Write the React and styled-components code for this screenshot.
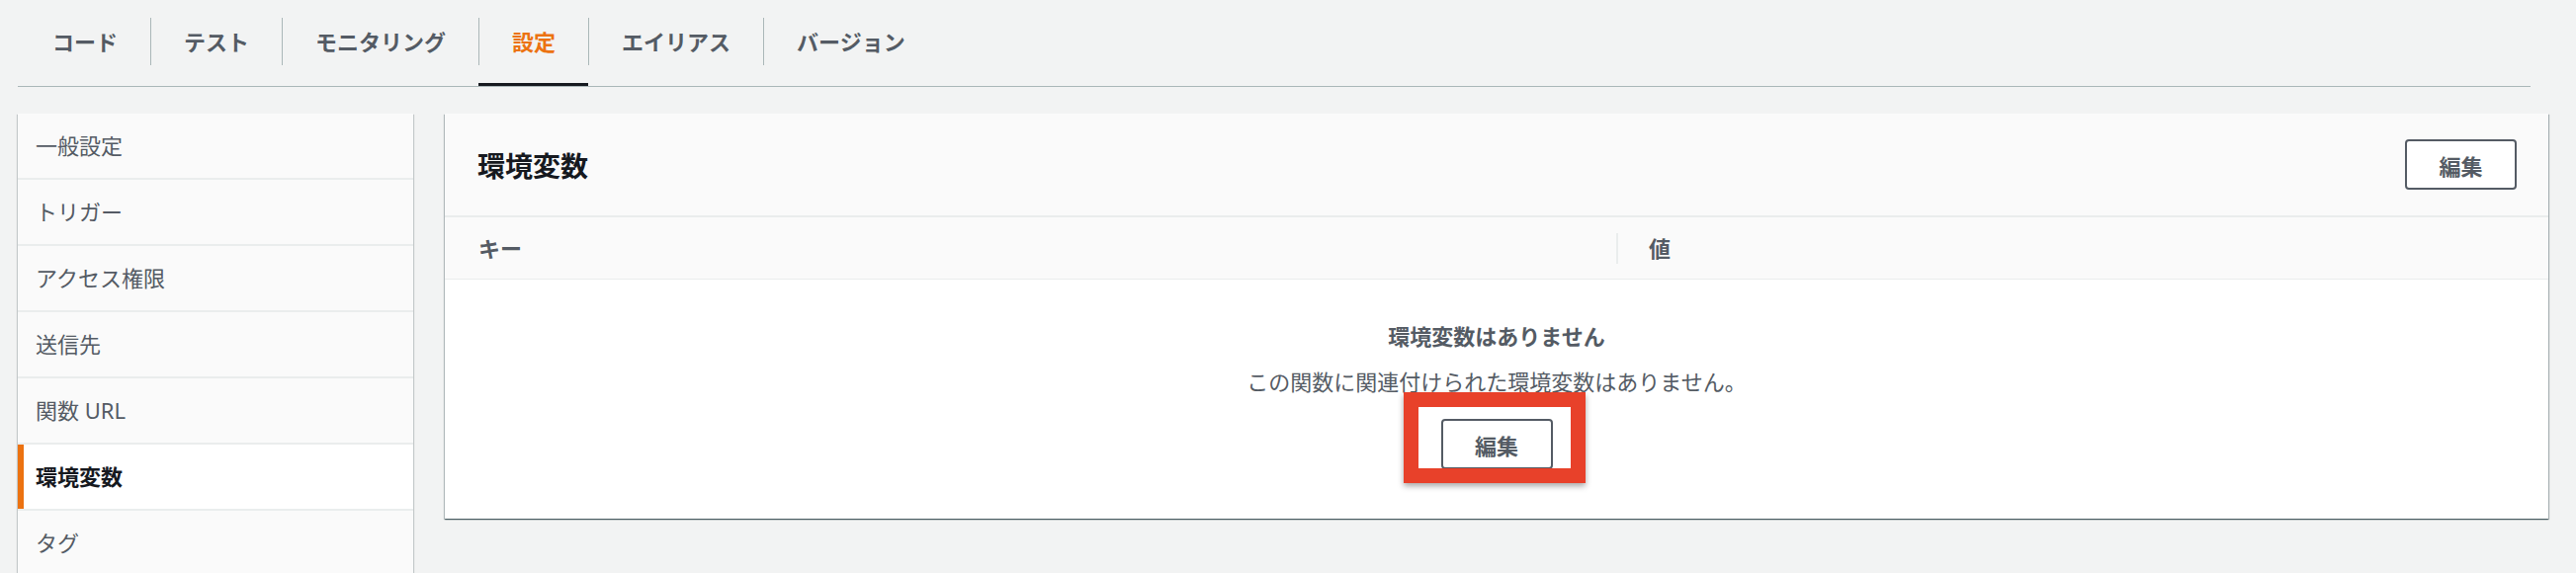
import React from 'react'
import styled, { createGlobalStyle } from 'styled-components'

const colors = {
  page: '#f2f3f3',
  text: '#545b64',
  dark: '#16191f',
  orange: '#ec7211',
  line: '#aab7b8',
  soft: '#eaeded',
  panelHead: '#fafafa',
  red: '#e8412a',
}

const GlobalStyle = createGlobalStyle`
  body {
    margin: 0;
    background: ${colors.page};
    font-family: "Noto Sans", "Noto Sans CJK JP", sans-serif;
    -webkit-font-smoothing: antialiased;
  }
`

const tabs = ['コード', 'テスト', 'モニタリング', '設定', 'エイリアス', 'バージョン']
const menu = ['一般設定', 'トリガー', 'アクセス権限', '送信先', '関数 URL', '環境変数', 'タグ']

export default function App() {
  return (
    <Page>
      <GlobalStyle />
      <TabBar>
        {tabs.map((t, i) => (
          <Tab key={t} active={t === '設定'}>
            <TabLabel first={i === 0} active={t === '設定'}>{t}</TabLabel>
          </Tab>
        ))}
      </TabBar>
      <Body>
        <Sidebar>
          {menu.map((m) => (
            <MenuItem key={m} active={m === '環境変数'}>{m}</MenuItem>
          ))}
        </Sidebar>
        <Panel>
          <PanelHeader>
            <PanelTitle>環境変数</PanelTitle>
            <EditButton>編集</EditButton>
          </PanelHeader>
          <TableHead>
            <HeadCell>キー</HeadCell>
            <HeadCell divided>値</HeadCell>
          </TableHead>
          <Empty>
            <EmptyTitle>環境変数はありません</EmptyTitle>
            <EmptyText>この関数に関連付けられた環境変数はありません。</EmptyText>
            <Anchor>
              <EditButton>編集</EditButton>
              <Highlight />
            </Anchor>
          </Empty>
        </Panel>
      </Body>
    </Page>
  )
}

const Page = styled.div`
  height: 580px;
  overflow: hidden;
  padding: 0 28px 0 18px;
  box-sizing: border-box;
`

const TabBar = styled.div`
  display: flex;
  margin-right: 18px;
  border-bottom: 1px solid ${colors.line};
`

const Tab = styled.div`
  padding: 18px 0 18px;
  border-bottom: 3px solid ${props => props.active ? colors.dark : 'transparent'};
`

const TabLabel = styled.div`
  height: 48px;
  line-height: 48px;
  padding: 0 33px 0 ${props => props.first ? '34px' : '33px'};
  border-left: 1px solid ${props => props.first ? 'transparent' : colors.line};
  font-size: 22px;
  font-weight: 700;
  color: ${props => props.active ? colors.orange : colors.text};
  white-space: nowrap;
`

const Body = styled.div`
  display: flex;
  gap: 32px;
  margin-top: 27px;
  align-items: flex-start;
`

const Sidebar = styled.div`
  width: 400px;
  flex-shrink: 0;
  background: ${colors.panelHead};
  box-shadow: 0 1px 1px 0 rgba(0, 28, 36, 0.3), 1px 1px 1px 0 rgba(0, 28, 36, 0.15), -1px 1px 1px 0 rgba(0, 28, 36, 0.15);
`

const MenuItem = styled.div`
  height: 65px;
  line-height: 65px;
  padding-left: 18px;
  font-size: 22px;
  font-weight: ${props => props.active ? 700 : 400};
  color: ${props => props.active ? colors.dark : colors.text};
  background: ${props => props.active ? '#ffffff' : colors.panelHead};
  box-shadow: ${props => props.active ? `inset 6px 0 0 ${colors.orange}` : 'none'};
  border-bottom: 2px solid ${colors.soft};
  white-space: nowrap;
`

const Panel = styled.div`
  flex: 1;
  background: #ffffff;
  box-shadow: 0 1px 1px 0 rgba(0, 28, 36, 0.5), 1px 1px 1px 0 rgba(0, 28, 36, 0.25), -1px 1px 1px 0 rgba(0, 28, 36, 0.2);
`

const PanelHeader = styled.div`
  height: 103px;
  display: flex;
  align-items: center;
  justify-content: space-between;
  padding: 0 32px 0 33px;
  background: ${colors.panelHead};
  border-bottom: 2px solid ${colors.soft};
`

const PanelTitle = styled.h2`
  margin: 0;
  font-size: 28px;
  font-weight: 700;
  color: ${colors.dark};
`

const EditButton = styled.button`
  width: 113px;
  height: 51px;
  box-sizing: border-box;
  border: 2px solid ${colors.text};
  border-radius: 4px;
  background: #ffffff;
  color: ${colors.text};
  font-family: inherit;
  font-size: 22px;
  font-weight: 700;
  padding: 0;
  cursor: pointer;
`

const TableHead = styled.div`
  display: grid;
  grid-template-columns: 1185px 1fr;
  height: 62px;
  align-items: center;
  background: ${colors.panelHead};
  border-bottom: 1px solid ${colors.soft};
`

const HeadCell = styled.div`
  height: 31px;
  line-height: 31px;
  padding-left: ${props => props.divided ? '31px' : '34px'};
  border-left: ${props => props.divided ? `2px solid ${colors.soft}` : 'none'};
  font-size: 22px;
  font-weight: 700;
  color: ${colors.text};
`

const Empty = styled.div`
  display: flex;
  flex-direction: column;
  align-items: center;
  padding: 42px 0 50px;
`

const EmptyTitle = styled.div`
  line-height: 30px;
  font-size: 22px;
  font-weight: 700;
  color: ${colors.text};
`

const EmptyText = styled.div`
  margin-top: 16px;
  line-height: 30px;
  font-size: 22px;
  color: ${colors.text};
`

const Anchor = styled.div`
  position: relative;
  margin-top: 23px;
  display: flex;
`

const Highlight = styled.div`
  position: absolute;
  left: -38px;
  top: -27px;
  width: 184px;
  height: 92px;
  box-sizing: border-box;
  border: 15px solid ${colors.red};
  box-shadow: 0 3px 6px rgba(0, 0, 0, 0.35);
  pointer-events: none;
`
